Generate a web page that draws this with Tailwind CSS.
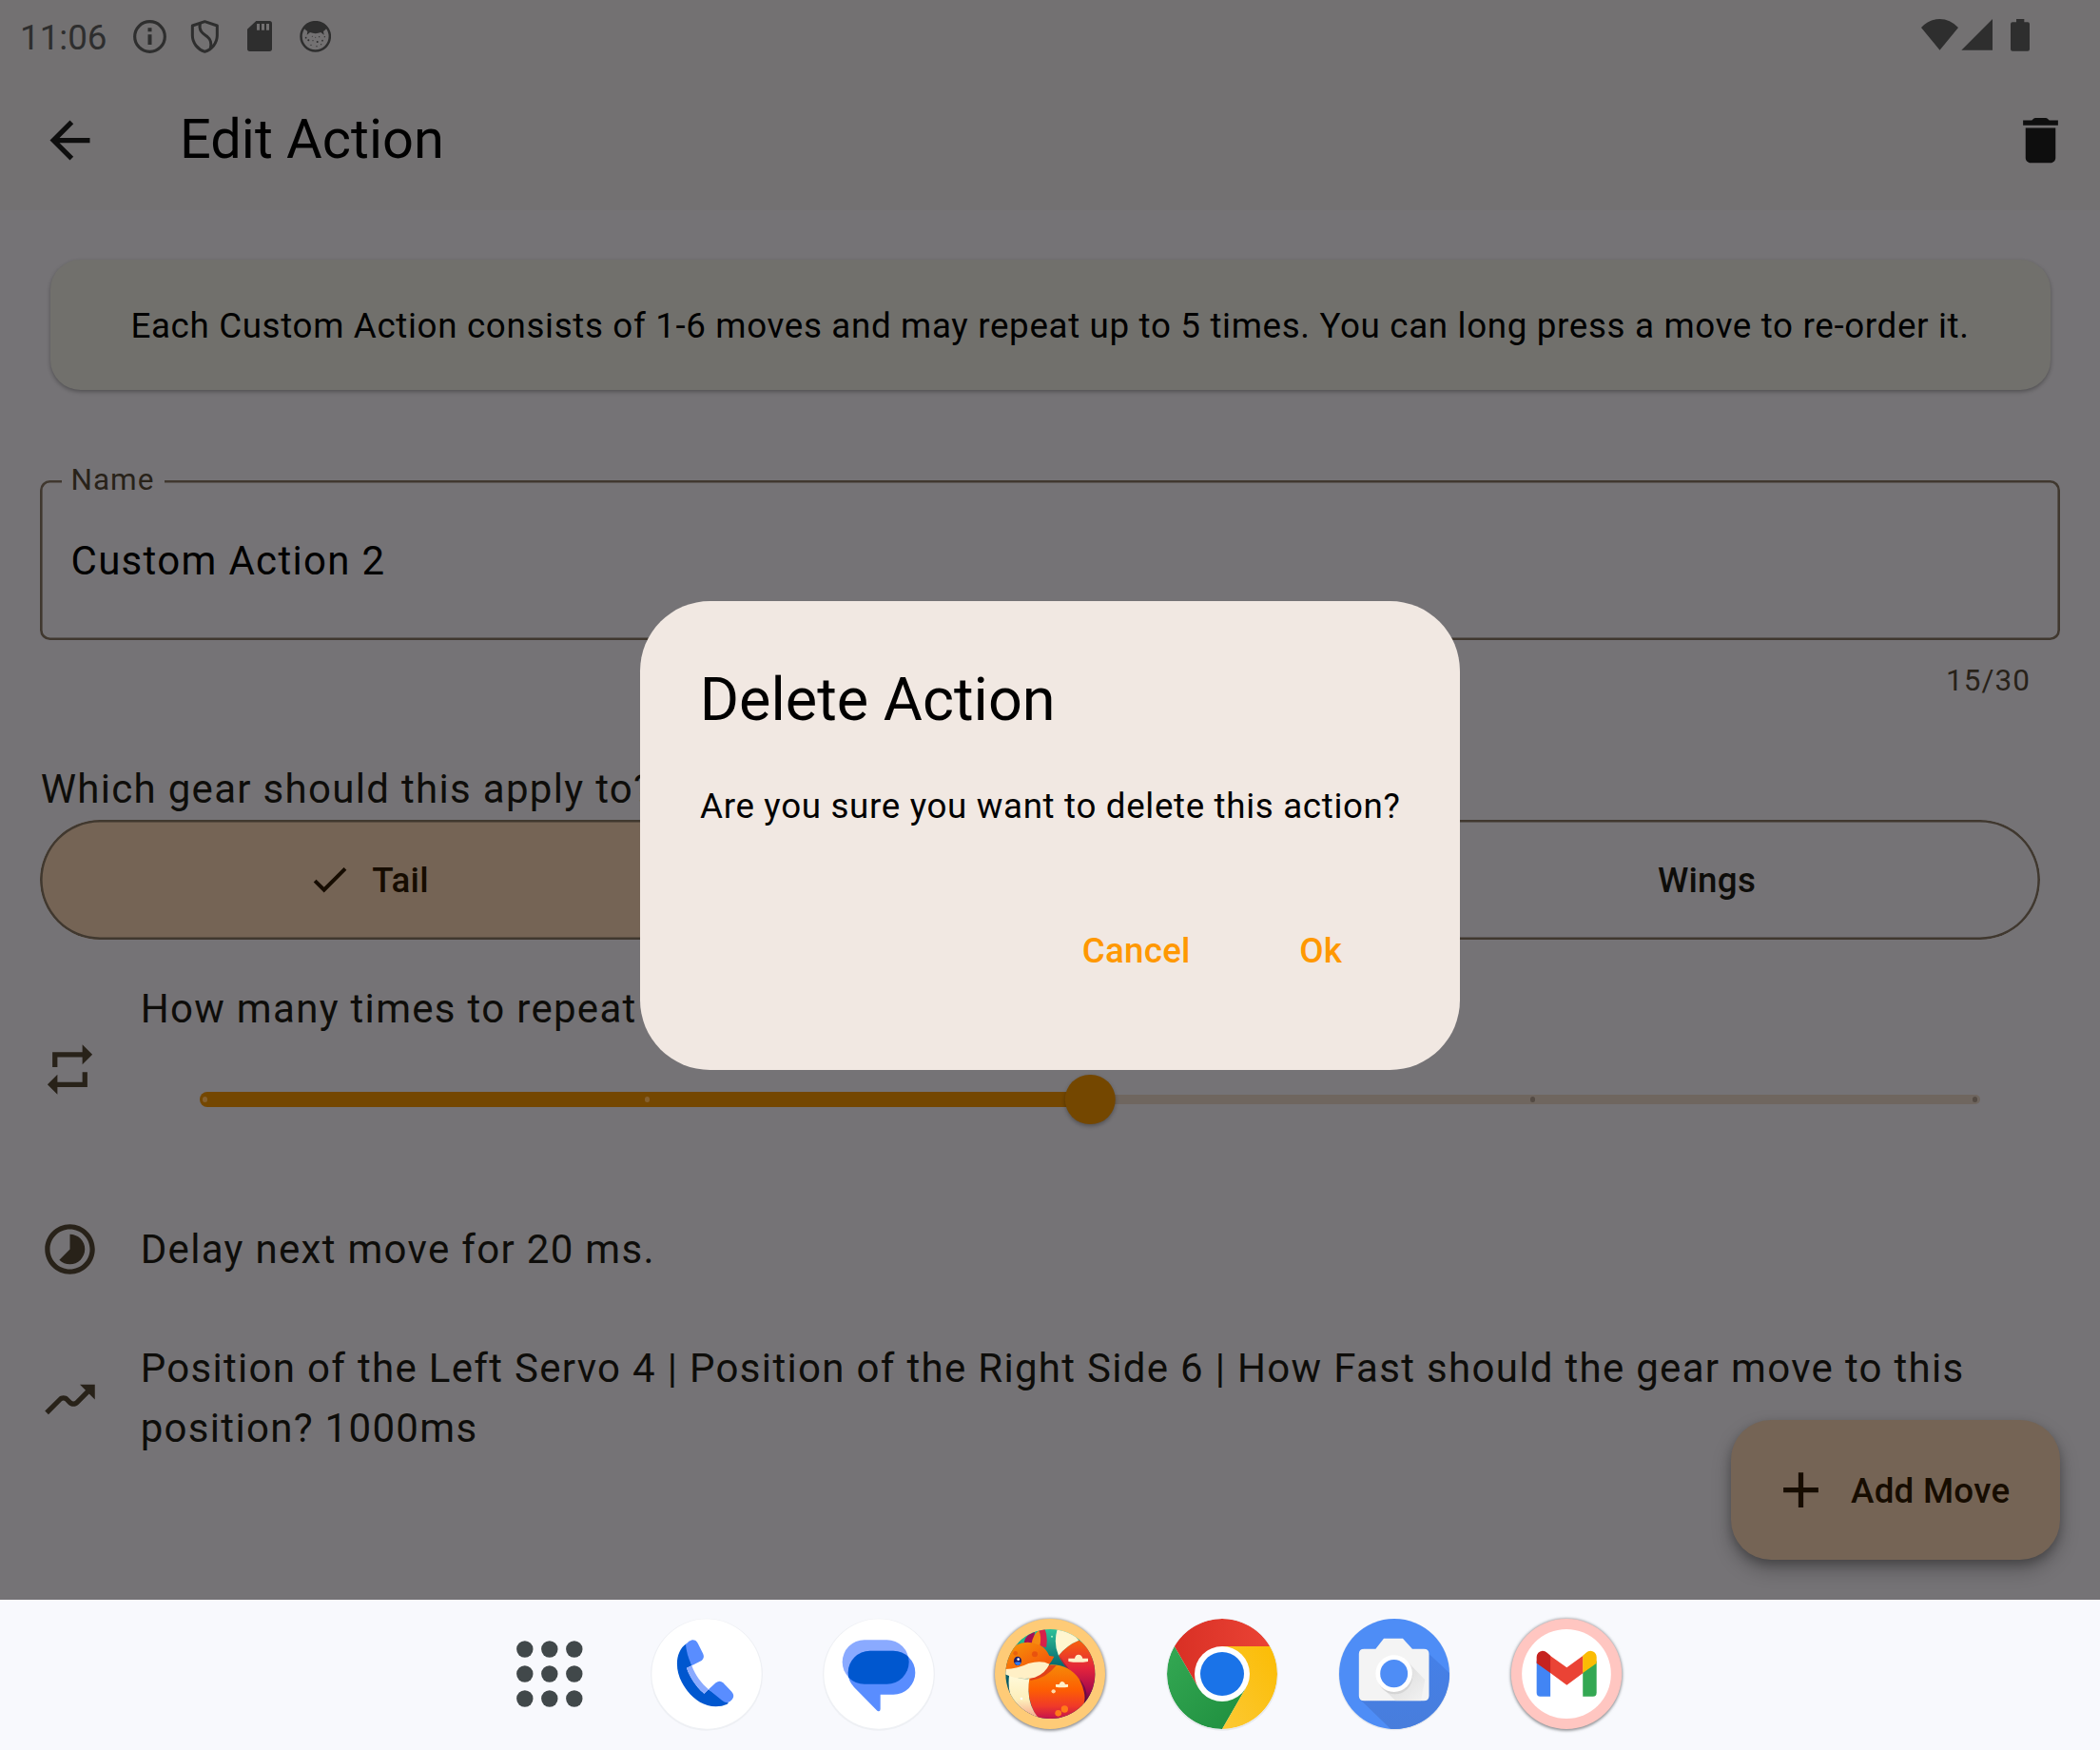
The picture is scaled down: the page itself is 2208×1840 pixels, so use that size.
<!DOCTYPE html>
<html lang="en">
<head>
<meta charset="utf-8">
<title>Edit Action</title>
<script src="https://cdn.jsdelivr.net/npm/@tailwindcss/browser@4"></script>
</head>
<body class="w-[2208px] h-[1840px] overflow-hidden bg-[#757376] font-['Roboto',sans-serif] text-[#0e0d0a]">
<div class="relative flex h-[1840px] w-[2208px] flex-col">

  <!-- Status bar -->
  <div class="flex h-[74px] items-start bg-[#737172] text-[#2e2e2e]">
    <span class="ml-[21px] mt-[17px] w-[119px] text-[36.75px] leading-[46px]">11:06</span>
    <svg class="mt-[21px] h-[35px] w-[35px]" viewBox="420 63 105 105"><circle cx="472.5" cy="115.5" r="47.5" fill="none" stroke="currentColor" stroke-width="9.500"/><path fill="currentColor" d="M466.500 88h12v11.500h-12zM466.500 109h12v32h-12z"/></svg>
    <svg class="ml-[25px] mt-[20px] h-[37px] w-[31px]" viewBox="600 60 93 111" fill="none" stroke="currentColor" stroke-width="9" stroke-linejoin="round"><path d="M646 68L685 81V112C685 136 668 156 646 163C624 156 607 136 607 112V81Z"/><path d="M631 73C626 98 640 106 654 116C668 127 667 141 664 153"/></svg>
    <svg class="ml-[29px] mt-[22px] h-[32px] w-[26px]" viewBox="780 66 78 96"><path fill="currentColor" fill-rule="evenodd" d="M808 66H850Q858 66 858 74V154Q858 162 850 162H788Q780 162 780 154V92ZM810 75V95H819V75ZM825 75V95H834V75ZM840 75V95H849V75Z"/></svg>
    <svg class="ml-[28.7px] mt-[22px] h-[33px] w-[33px]" viewBox="943 65 99 99"><circle cx="993" cy="114" r="45.500" fill="none" stroke="currentColor" stroke-width="7.500"/><path fill="currentColor" d="M955 84Q970 68 993 68Q1016 68 1031 84Q1024 96 1018 98L1020 109L1010 101Q993 108 976 101L966 109L968 98Q960 95 955 84Z"/><g fill="currentColor"><circle cx="963" cy="118" r="2.5"/><circle cx="971" cy="126" r="3"/><circle cx="983" cy="114" r="1.5"/><circle cx="985" cy="127" r="1.7"/><circle cx="999" cy="131" r="3"/><circle cx="1005" cy="115" r="1.8"/><circle cx="1015" cy="127" r="2.5"/><circle cx="1022" cy="115" r="2"/><circle cx="979" cy="141" r="2"/><circle cx="997" cy="145" r="2"/><circle cx="1011" cy="139" r="1.8"/><circle cx="993" cy="117" r="1.5"/></g></svg>
    <svg class="ml-auto mr-[74px] mt-[20px] h-[34px] w-[114px]" viewBox="180 60 342 102" fill="currentColor"><path d="M238.500 158L180 87Q206 60 238.500 60Q271 60 297 87ZM405 60V158.500H307ZM480 60H505V70H516Q522 70 522 76V155Q522 161 516 161H468Q462 161 462 155V76Q462 70 468 70H480Z"/></svg>
  </div>

  <!-- App bar -->
  <header class="flex h-[147px] items-center bg-[#737172] pl-[42px] pr-[31.5px]">
    <svg class="h-[63px] w-[63px]" viewBox="0 0 24 24" fill="#0e0e0e"><path d="M20 11H7.830l5.590-5.590L12 4l-8 8 8 8 1.410-1.410L7.830 13H20v-2z"/></svg>
    <h1 class="ml-[84px] -mt-[3px] text-[57.75px] leading-[74px] text-black">Edit Action</h1>
    <svg class="ml-auto h-[63px] w-[63px]" viewBox="0 0 24 24" fill="#0e0e0e"><path d="M6 19c0 1.100.9 2 2 2h8c1.100 0 2-.9 2-2V7H6v12z"/><path d="M19 4h-3.500l-.71-.71c-.18-.18-.44-.29-.7-.29H9.910c-.26 0-.52.110-.7.290L8.500 4H5v2h14V4z"/></svg>
  </header>

  <main class="relative flex h-[1461px] flex-col px-[42px] pt-[52px]">
    <!-- Hint card -->
    <p class="mx-[10.5px] h-[137px] rounded-[31.5px] bg-[#71706c] pt-[44px] text-center text-[36.75px] leading-[52.5px] tracking-[0.656px] text-black shadow-[0_2px_4px_rgba(0,0,0,0.3)]">Each Custom Action consists of 1-6 moves and may repeat up to 5 times. You can long press a move to re-order it.</p>

    <!-- Name field -->
    <div class="relative mt-[95px] h-[168px] rounded-[10.5px] pl-[32.500px] pt-[53px] shadow-[inset_0_0_0_2.6px_#40382f]">
      <span class="absolute left-[22.500px] top-[-19px] bg-[#757376] pl-[10px] pr-[10.500px] text-[31.5px] leading-[38px] tracking-[0.98px] text-[#282219]">Name</span>
      <div class="text-[42px] leading-[63px] tracking-[1.3125px] text-black">Custom Action 2</div>
    </div>
    <div class="mt-[22px] mr-[31px] h-[42px] text-right text-[31.5px] leading-[42px] tracking-[1.05px] text-[#282219]">15/30</div>

    <!-- Gear selector -->
    <h2 class="mt-[61px] h-[63px] pl-[0.700px] text-[42px] leading-[63px] tracking-[1.3125px]">Which gear should this apply to?</h2>
    <div class="mt-[1px] mr-[21px] grid h-[126px] grid-cols-3 overflow-hidden rounded-full text-[36.75px] font-medium tracking-[0.2625px]">
      <div class="flex items-center rounded-l-full bg-[#756455] pl-[281px] text-[#160c00] shadow-[inset_0_0_0_2.6px_#40382f]">
        <svg class="h-[47.25px] w-[47.25px]" viewBox="0 0 24 24" fill="currentColor"><path d="M9 16.170L4.830 12l-1.420 1.410L9 19 21 7l-1.410-1.410z"/></svg>
        <span class="ml-[21px] pt-[2px]">Tail</span>
      </div>
      <div class="shadow-[inset_0_0_0_2.6px_#40382f]"></div>
      <div class="flex items-center justify-center rounded-r-full shadow-[inset_0_0_0_2.6px_#40382f]"><span class="pt-[2px]">Wings</span></div>
    </div>

    <!-- Repeat slider -->
    <section class="mt-[41px] flex h-[190px]">
      <svg class="mt-[64px] h-[63px] w-[63px] shrink-0" viewBox="0 0 24 24" fill="#282219"><path d="M7 7h10v3l4-4-4-4v3H5v6h2V7zm10 10H7v-3l-4 4 4 4v-3h12v-6h-2v4z"/></svg>
      <div class="ml-[42px] flex-1">
        <h2 class="pl-[0.700px] text-[42px] leading-[63px] tracking-[1.3125px]">How many times to repeat</h2>
        <div class="relative ml-[63px] mr-[84px] mt-[37.500px] flex h-[53px] items-center">
          <div class="h-[16px] flex-1 rounded-l-full bg-[#744700]"></div>
          <div class="h-[10.5px] flex-1 rounded-r-full bg-[#6f665f]"></div>
          <div class="absolute inset-x-0 flex justify-between px-[3px]">
            <i class="h-[5.25px] w-[5.25px] rounded-full bg-[#84602f]"></i>
            <i class="h-[5.25px] w-[5.25px] rounded-full bg-[#84602f]"></i>
            <i class="h-[5.25px] w-[5.25px] rounded-full bg-[#84602f]"></i>
            <i class="h-[5.25px] w-[5.25px] rounded-full bg-[#544b44]"></i>
            <i class="h-[5.25px] w-[5.25px] rounded-full bg-[#544b44]"></i>
          </div>
          <div class="absolute left-1/2 h-[52.5px] w-[52.5px] -translate-x-1/2 rounded-full bg-[#744700] shadow-[0_2px_4px_rgba(0,0,0,0.3)]"></div>
        </div>
      </div>
    </section>

    <!-- Moves -->
    <div class="mt-[63px] flex h-[63px] items-center">
      <svg class="h-[63px] w-[63px]" viewBox="0 0 24 24" fill="#282219"><path d="M16.240 7.760C15.070 6.590 13.540 6 12 6v6l-4.240 4.240c2.340 2.340 6.140 2.340 8.490 0 2.340-2.340 2.340-6.140-.01-8.480zM12 2C6.480 2 2 6.480 2 12s4.480 10 10 10 10-4.480 10-10S17.520 2 12 2zm0 18c-4.420 0-8-3.580-8-8s3.580-8 8-8 8 3.580 8 8-3.580 8-8 8z"/></svg>
      <p class="ml-[42.700px] text-[42px] leading-[63px] tracking-[1.3125px]">Delay next move for 20 ms.</p>
    </div>
    <div class="mt-[62px] flex h-[126px] items-center">
      <svg class="mt-[3px] h-[63px] w-[63px] shrink-0" viewBox="0 0 24 24" fill="#282219"><path d="M19.710 9.710L22 12V6h-6l2.290 2.290-4.170 4.170c-.39.39-1.020.39-1.410 0l-1.170-1.170c-1.170-1.170-3.070-1.170-4.240 0L2 16.590 3.410 18l5.290-5.290c.39-.39 1.020-.39 1.410 0l1.170 1.170c1.170 1.170 3.070 1.170 4.240 0L19.710 9.710z"/></svg>
      <p class="ml-[42.700px] w-[1950px] text-[42px] leading-[63px] tracking-[1.3125px]">Position of the Left Servo 4 | Position of the Right Side 6 | How Fast should the gear move to this<br>position? 1000ms</p>
    </div>

    <!-- Floating action button -->
    <button class="absolute bottom-[42px] right-[42px] flex h-[147px] w-[346px] items-center rounded-[42px] bg-[#756455] pl-[42px] text-[36.75px] font-medium tracking-[0.2625px] text-[#160c00] shadow-[0_10px_20px_rgba(0,0,0,0.28),0_4px_10px_rgba(0,0,0,0.2)]">
      <svg class="h-[63px] w-[63px]" viewBox="0 0 24 24" fill="currentColor"><path d="M19 13h-6v6h-2v-6H5v-2h6V5h2v6h6v2z"/></svg>
      <span class="ml-[21px] pt-[2px]">Add Move</span>
    </button>
  </main>

  <!-- Dock -->
  <nav class="flex h-[158px] items-start bg-[#f8f9fd] pl-[542.500px] pt-[18.300px]">
    <svg class="mt-[25px] h-[70px] w-[70px]" viewBox="0 0 70 70" fill="#41484a"><circle cx="8.800" cy="9" r="8.700"/><circle cx="34.800" cy="9" r="8.700"/><circle cx="60.800" cy="9" r="8.700"/><circle cx="8.800" cy="35" r="8.700"/><circle cx="34.800" cy="35" r="8.700"/><circle cx="60.800" cy="35" r="8.700"/><circle cx="8.800" cy="61" r="8.700"/><circle cx="34.800" cy="61" r="8.700"/><circle cx="60.800" cy="61" r="8.700"/></svg>
    <div class="ml-[70.200px] flex gap-[60.900px]">
      <!-- Phone -->
      <svg class="h-[120px] w-[120px] overflow-visible" viewBox="488 61 360 360">
        <circle cx="668" cy="243" r="177" fill="#eef0f4"/><circle cx="668" cy="241" r="173" fill="#fff"/>
        <path fill="#0057cf" d="M604 146C570 168 566 225 590 268C614 312 650 343 697 344Q722 344 737 333L674 290L660 303C636 283 615 252 605 222L621 215Z"/>
        <path fill="#8aaaff" d="M605 222L621 215C632 245 652 272 674 290L660 303C636 283 615 252 605 222Z"/>
        <path fill="#598dff" d="M602 148Q612 136 622 134Q634 133 640 144L657 178Q662 190 652 199L621 215Q604 178 602 148Z"/>
        <path fill="#598dff" d="M674 290L697 269Q709 260 720 269L747 297Q758 310 748 322Q742 330 733 332Q726 331 716 324Z"/>
      </svg>
      <!-- Messages -->
      <svg class="h-[120px] w-[120px] overflow-visible" viewBox="1030 61 360 360">
        <defs><clipPath id="bubble"><rect x="1095" y="134" width="210" height="139" rx="69.500"/></clipPath></defs>
        <circle cx="1210" cy="243" r="177" fill="#eef0f4"/><circle cx="1210" cy="241" r="173" fill="#fff"/>
        <rect x="1095" y="134" width="210" height="139" rx="69.500" fill="#8aaaff"/>
        <path fill="#598dff" d="M1182 168H1256A69 69 0 0 1 1256 306H1215V352Q1214 363 1205 357L1132 283Q1113 262 1113 237A69 69 0 0 1 1182 168Z"/>
        <rect x="1113" y="168" width="212" height="139" rx="69.500" fill="#0057cf" clip-path="url(#bubble)"/>
      </svg>
      <!-- Fox -->
      <svg class="h-[120px] w-[120px] overflow-visible" viewBox="72 61 360 360">
        <defs>
          <clipPath id="fox"><circle cx="253" cy="241" r="141"/></clipPath>
          <linearGradient id="body" x1="0" y1="0" x2="0" y2="1"><stop offset="0" stop-color="#f58a08"/><stop offset=".45" stop-color="#fd5f02"/><stop offset=".75" stop-color="#f03a28"/><stop offset="1" stop-color="#c3104f"/></linearGradient>
          <linearGradient id="tail" x1="0" y1="0" x2="0" y2="1"><stop offset="0" stop-color="#f8620c"/><stop offset=".45" stop-color="#e2233c"/><stop offset=".8" stop-color="#a60a4c"/><stop offset="1" stop-color="#4a0a3e"/></linearGradient>
          <linearGradient id="sky" x1="0" y1="0" x2="0" y2="1"><stop offset="0" stop-color="#2fc39a"/><stop offset=".4" stop-color="#076a70"/><stop offset="1" stop-color="#063a55"/></linearGradient>
          <linearGradient id="head" x1="0" y1="0" x2="1" y2="1"><stop offset="0" stop-color="#f79a08"/><stop offset="1" stop-color="#f4480b"/></linearGradient>
          <linearGradient id="cream" x1="0" y1="0" x2="0" y2="1"><stop offset="0" stop-color="#fffbdc"/><stop offset=".6" stop-color="#fdeebb"/><stop offset="1" stop-color="#f7a98c"/></linearGradient>
          <filter id="blur"><feGaussianBlur stdDeviation="4"/></filter>
        </defs>
        <circle cx="252" cy="243" r="177" fill="#8d8f93" filter="url(#blur)"/>
        <circle cx="252" cy="241" r="174" fill="#fecb77"/>
        <g clip-path="url(#fox)">
          <rect x="110" y="98" width="286" height="286" fill="url(#sky)"/>
          <path fill="#20b98f" d="M145 140Q175 108 220 104L190 150Z"/>
          <path fill="#a30d55" d="M170 142Q172 118 204 108L200 146Z"/>
          <path fill="#d8204a" d="M212 150Q205 120 220 100H236Q246 125 240 158Z"/>
          <path fill="#f58a12" d="M194 145Q198 118 217 104Q226 125 220 152Z"/>
          <path fill="url(#tail)" d="M279 183Q305 150 343 135Q395 165 396 240Q395 305 360 335Q362 290 330 248Q290 210 279 183Z"/>
          <path fill="#3b0a40" opacity=".45" d="M282 183Q305 225 350 262Q378 300 360 335Q366 290 330 250Q292 212 282 183Z"/>
          <path fill="#fff6d0" d="M270 100H300Q330 115 343 135Q305 150 279 183Q262 145 275 100Z"/>
          <path fill="url(#body)" d="M185 255Q215 220 255 212Q310 210 345 258Q378 325 345 360Q300 390 215 384Q176 325 185 255Z"/>
          <path fill="#d52a22" opacity=".7" d="M190 262Q240 255 272 214H250L190 250Z"/>
          <path fill="url(#cream)" d="M124 240Q155 260 187 256Q175 330 214 378Q150 375 128 310Q118 280 124 240Z"/>
          <path fill="url(#head)" d="M106 230Q112 170 145 150Q180 132 220 150Q240 160 250 184L265 186Q258 200 249 212L110 232Z"/>
          <path fill="#fff0c6" d="M110 226Q150 225 184 208Q225 197 250 210Q237 240 204 252Q160 264 110 242Z"/>
          <circle cx="204" cy="179" r="9" fill="#e9520e"/><circle cx="143" cy="176" r="7" fill="#e9620e"/>
          <ellipse cx="150" cy="200" rx="12" ry="14" fill="#1b1e68"/><path fill="#2f7bf0" d="M140 206Q151 199 161 206Q158 215 150 214Q143 213 140 206Z"/><circle cx="152" cy="195" r="4" fill="#fff"/>
          <path fill="#fff0c9" d="M310 192H330Q332 180 342 180Q352 180 355 192H372V202Q341 207 310 202ZM270 274H281Q284 264 291 265Q299 267 300 274H309V282Q290 286 270 282Z"/>
          <circle cx="263" cy="296" r="6.500" fill="#ffd9a8"/><circle cx="298" cy="352" r="11" fill="#ff7a18"/><circle cx="278" cy="365" r="10" fill="#ff7a18"/><circle cx="162" cy="319" r="4" fill="#fff"/><circle cx="258" cy="123" r="3" fill="#a8f5c0"/>
        </g>
      </svg>
      <!-- Chrome -->
      <svg class="h-[120px] w-[120px] overflow-visible" viewBox="-60 -60 120 120">
        <defs><clipPath id="disc"><circle r="58"/></clipPath>
        <linearGradient id="cr"><stop offset="0" stop-color="#d93025"/><stop offset="1" stop-color="#ea4335"/></linearGradient>
        <linearGradient id="cg" x1="0" y1="0" x2="1" y2="1"><stop offset="0" stop-color="#34a853"/><stop offset="1" stop-color="#1e8e3e"/></linearGradient>
        <linearGradient id="cy" x1="1" y1="0" x2="0" y2="1"><stop offset="0" stop-color="#fbbc04"/><stop offset="1" stop-color="#fcc934"/></linearGradient></defs>
        <circle cy=".8" r="59" fill="#e8eaee"/>
        <g clip-path="url(#disc)">
          <path fill="url(#cr)" d="M0 -29H50.200A58 58 0 0 0 -50.200 -29L-25.100 14.500L0 0Z"/>
          <path fill="url(#cg)" d="M-50.200 -29L-25.100 14.500L25.100 14.500L0 58A58 58 0 0 1 -50.200 -29Z"/>
          <path fill="url(#cy)" d="M0 -29H50.200A58 58 0 0 1 0 58L25.100 14.500L0 0Z"/>
        </g>
        <circle r="29" fill="#fff"/><circle r="23" fill="#1a73e8"/>
      </svg>
      <!-- Camera -->
      <svg class="h-[120px] w-[120px] overflow-visible" viewBox="599.800 61 348.400 360" preserveAspectRatio="none">
        <defs><clipPath id="cam"><ellipse cx="774" cy="241" rx="168.400" ry="174"/></clipPath>
        <linearGradient id="cs" x1="0" y1="0" x2="0" y2="1"><stop offset="0" stop-color="#4580e8"/><stop offset="1" stop-color="#487ddb"/></linearGradient>
        <linearGradient id="ls" x1="0" y1="0" x2="1" y2="1"><stop offset=".4" stop-color="#cfcfcf"/><stop offset="1" stop-color="#f2f2f2"/></linearGradient></defs>
        <ellipse cx="774" cy="243" rx="171" ry="176" fill="#e8eaee"/>
        <g clip-path="url(#cam)">
          <rect x="600" y="61" width="350" height="360" fill="#4e8df6"/>
          <path fill="url(#cs)" d="M878 176L960 255V430H778L670 322L860 300Z"/>
        </g>
        <path fill="#f4f4f4" d="M742 129H800L829 162H864Q880 162 880 178V310Q880 326 864 326H682Q666 326 666 310V178Q666 162 682 162H717Z"/>
        <path fill="url(#ls)" d="M814 202L868 260L855 326H778L734 281Z" opacity=".55"/>
        <ellipse cx="776" cy="248" rx="54" ry="57" fill="#c9c9c9" opacity=".6"/>
        <ellipse cx="773" cy="240" rx="56" ry="58" fill="#fff"/><ellipse cx="773" cy="240" rx="42" ry="44" fill="#4e8df6"/>
      </svg>
      <!-- Gmail -->
      <svg class="h-[120px] w-[120px] overflow-visible" viewBox="1124.800 61 348.400 360" preserveAspectRatio="none">
        <ellipse cx="1299" cy="243" rx="171" ry="177" fill="#8d8f93" filter="url(#blur)"/>
        <ellipse cx="1299" cy="241" rx="169" ry="174" fill="#ffc6c1"/>
        <ellipse cx="1299" cy="241" rx="136" ry="141" fill="#fff"/>
        <path fill="#4285f4" d="M1208 200L1250 236V312H1219Q1208 312 1208 300Z"/>
        <path fill="#34a853" d="M1391 200L1349 236V312H1380Q1391 312 1391 300Z"/>
        <path fill="#ea4335" d="M1249 183L1300 221L1350 183V238L1300 276L1249 237Z"/>
        <path fill="#c5221f" d="M1208 207V188Q1209 170 1226 168Q1234 168 1240 174L1250 183V238Z"/>
        <path fill="#fbbc04" d="M1391 207V188Q1390 170 1373 168Q1365 168 1359 174L1349 183V238Z"/>
      </svg>
    </div>
  </nav>

  <!-- Confirmation dialog -->
  <div role="dialog" class="absolute left-[672.750px] top-[631.500px] flex h-[493.500px] w-[862.500px] flex-col rounded-[73.5px] bg-[#f1e8e2] px-[63px] pt-[62px] text-black">
    <h2 class="h-[84px] text-[63px] leading-[84px]">Delete Action</h2>
    <p class="mt-[44px] pl-[0.300px] text-[36.75px] leading-[52.5px] tracking-[0.656px] whitespace-nowrap">Are you sure you want to delete this action?</p>
    <div class="mt-[99.500px] mr-[61px] flex justify-end gap-[114.500px] text-[36.75px] font-medium leading-[52.5px] tracking-[0.2625px] text-[#ff9800]">
      <button>Cancel</button>
      <button>Ok</button>
    </div>
  </div>
</div>
</body>
</html>
